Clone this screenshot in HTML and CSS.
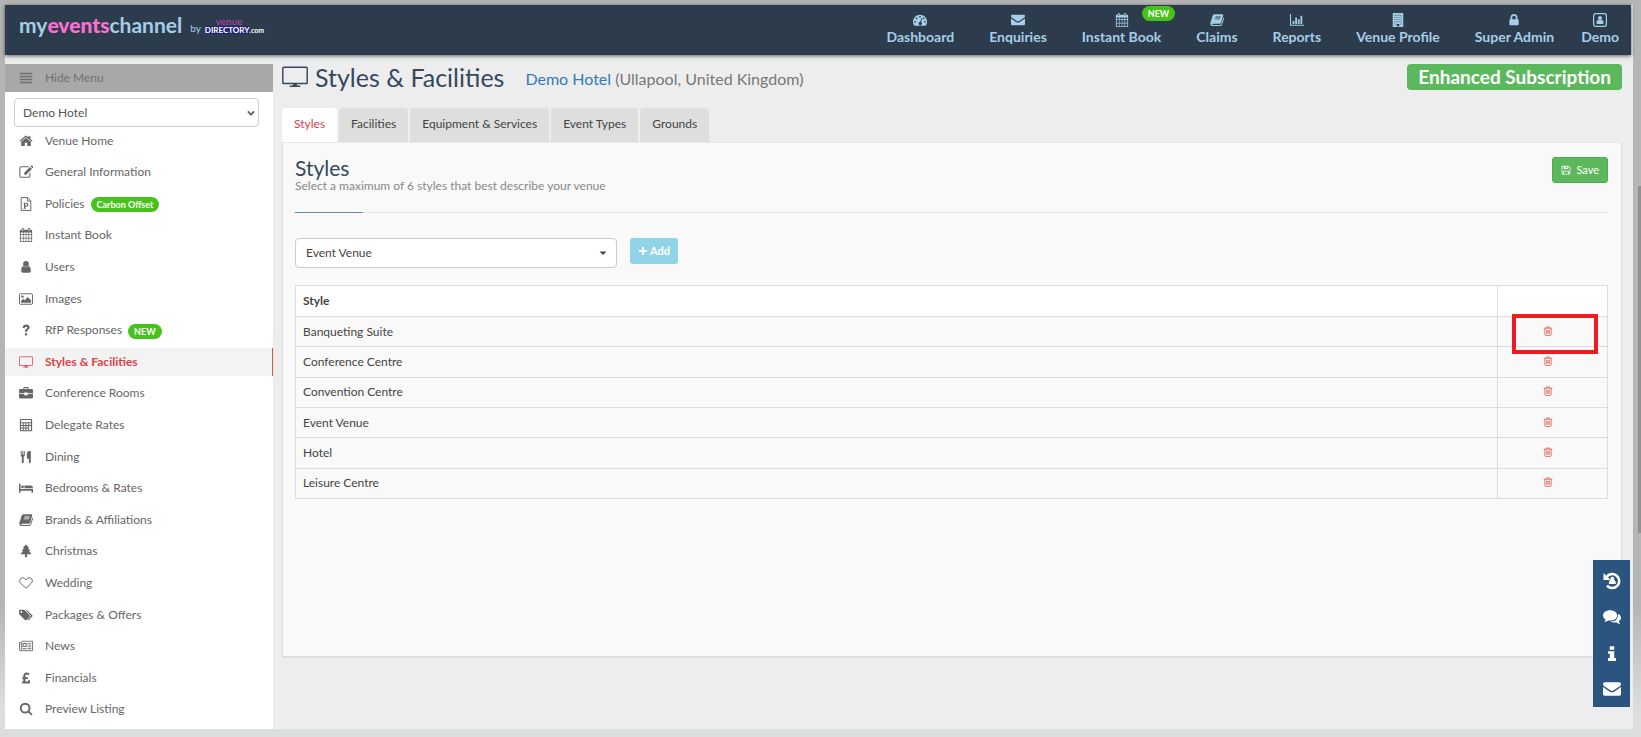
FILE: index.html
```html
<!DOCTYPE html>
<html lang="en">
<head>
  <meta charset="UTF-8" />
  <title>Styles &amp; Facilities</title>
  <meta name="viewport" content="width=device-width, initial-scale=1" />
  <link rel="stylesheet" href="styles.css">
</head>
<body>
  <!-- Icon sprite -->
  <svg class="sprite" aria-hidden="true">
    <symbol id="i-dash" viewBox="0 0 16 16"><path fill-rule="evenodd" d="M8 2a8 8 0 0 0-6.700 12.300q.2.400.7.400h12q.500 0 .7-.4A8 8 0 0 0 8 2zM8 3.300a1 1 0 1 1 0 2 1 1 0 0 1 0-2zM4 5a1 1 0 1 1 0 2 1 1 0 0 1 0-2zM2.400 9a1 1 0 1 1 0 2 1 1 0 0 1 0-2zM13.600 9a1 1 0 1 1 0 2 1 1 0 0 1 0-2zM12 5a1 1 0 1 1 0 2 1 1 0 0 1 0-2zM9.600 6l.9.300-1.300 4.300a1.800 1.800 0 1 1-1-.2z"/></symbol>
    <symbol id="i-mail" viewBox="0 0 16 16"><path d="M0 3.500Q0 2 1.500 2h13Q16 2 16 3.500q0 1-1.200 2L9.500 9.200Q8 10.300 6.500 9.200L1.200 5.500Q0 4.500 0 3.500zM0 6q.5.500 1 .8l4.800 3.400q2.200 1.500 4.400 0L15 6.800q.5-.3 1-.8v6.500q0 1.500-1.500 1.500h-13Q0 14 0 12.500z"/></symbol>
    <symbol id="i-cal" viewBox="0 0 16 16"><path fill-rule="evenodd" d="M1 3q0-1 1-1h1V1q0-1 1.200-1T5.400 1v1h5V1q0-1 1.200-1t1.200 1v1H14q1 0 1 1v12q0 1-1 1H2q-1 0-1-1zM3.800 1v2.500h.8V1zM11.200 1v2.500h.8V1zM2 5v2.200h2.500V5zM5.200 5v2.200h2.500V5zM8.400 5v2.200h2.400V5zM11.600 5v2.200H14V5zM2 8v3h2.500V8zM5.200 8v3h2.500V8zM8.400 8v3h2.400V8zM11.600 8v3H14V8zM2 12v3h2.500v-3zM5.200 12v3h2.500v-3zM8.400 12v3h2.400v-3zM11.600 12v3H14v-3z"/></symbol>
    <symbol id="i-book" viewBox="0 0 16 16"><path fill-rule="evenodd" d="M5.500 1.500H14q1.500 0 1 1.500l-2.300 8q-.4 1.300-1.700 1.300H3.300q-.8 0-.9.500.1.900 1.300.9h8.200q.8 0 1-.8L15.300 5q1 .6.600 1.800l-2.100 6.700q-.4 1.300-1.800 1.300H3.200Q1.300 14.800.5 13q-.4-1 0-2L3 3.200Q3.600 1.500 5.500 1.500zM6.300 4l-.3 1h6l.3-1zM5.700 6.200l-.3 1h6l.3-1z"/></symbol>
    <symbol id="i-chart" viewBox="0 0 16 16"><path d="M0 1h1.200v12.500H16v1.200H0zM3 9h2v3.500H3zM6 5h2v7.500H6zM9 7h2v5.500H9zM12 3h2v9.500h-2z"/></symbol>
    <symbol id="i-building" viewBox="0 0 16 16"><path fill-rule="evenodd" d="M2 0h12v16H2zM4 2v1h1V2zM6.300 2v1h1V2zM8.600 2v1h1V2zM11 2v1h1V2zM4 4.500v1h1v-1zM6.300 4.500v1h1v-1zM8.600 4.500v1h1v-1zM11 4.500v1h1v-1zM4 7v1h1V7zM6.300 7v1h1V7zM8.600 7v1h1V7zM11 7v1h1V7zM4 9.500v1h1v-1zM6.300 9.500v1h1v-1zM8.600 9.500v1h1v-1zM11 9.500v1h1v-1zM4 12v1h1v-1zM11 12v1h1v-1zM6.500 12.500V15h3v-2.500z"/></symbol>
    <symbol id="i-lock" viewBox="0 0 16 16"><path fill-rule="evenodd" d="M4 7V5a4 4 0 0 1 8 0v2h.5q.8 0 .8.800v5.400q0 .8-.8.800h-9q-.8 0-.8-.8V7.800q0-.8.8-.8zM6 7h4V5a2 2 0 0 0-4 0z"/></symbol>
    <symbol id="i-idbox" viewBox="0 0 16 16"><rect x="0.700" y="0.700" width="14.600" height="14.600" rx="2.500" fill="none" stroke="currentColor" stroke-width="1.400"/><circle cx="8" cy="5.800" r="2.300"/><path d="M4 12.500q0-5 2.300-4.800Q8 9 9.700 7.700 12 7.500 12 12.500z"/></symbol>
    <symbol id="i-bars" viewBox="0 0 16 16"><path d="M1 2h14v1.800H1zM1 5.400h14v1.800H1zM1 8.800h14v1.800H1zM1 12.200h14V14H1z"/></symbol>
    <symbol id="i-home" viewBox="0 0 16 16"><path d="M8 4.200l5.500 4.600V13q0 .7-.7.700H9.400V10H6.600v3.700H3.200q-.7 0-.7-.7V8.800zM8 1.800q.5 0 .9.400l1.900 1.600V2.500h2.200v3.200l2.500 2.100-.8 1L8 3.300l-6.700 5.500-.8-1L7.100 2.200q.4-.4.900-.4z"/></symbol>
    <symbol id="i-edit" viewBox="0 0 16 16"><path d="M12.500 9v3.500q0 1.500-1.500 1.500H2.500Q1 14 1 12.500v-9Q1 2 2.500 2H11" fill="none" stroke="currentColor" stroke-width="1.200"/><path d="M12.500 2.200l2.300 2.300-6.600 6.600H6V8.800zM13.200 1.500l.8-.8q.5-.4 1 0l1 1q.5.500 0 1.100l-.7.900z"/></symbol>
    <symbol id="i-file" viewBox="0 0 16 16"><path d="M2.500.6h7.300l3.700 3.700v11.100h-11zM9.500.6v4h4" fill="none" stroke="currentColor" stroke-width="1.100"/><path fill-rule="evenodd" d="M5 6.500h3.500q2.300.2 2.300 2.200T8.500 11H7.200v1.500H8v1H5v-1h.7v-5H5zM7.200 7.500V10h1q1.100 0 1.100-1.300 0-1.200-1.100-1.200z"/></symbol>
    <symbol id="i-user" viewBox="0 0 16 16"><circle cx="8" cy="4.500" r="3.300"/><path d="M2.500 12.500q0-5.500 2.800-5.300 2.700 2 5.400 0 2.800-.2 2.800 5.300 0 2-2 2h-7q-2 0-2-2z"/></symbol>
    <symbol id="i-image" viewBox="0 0 16 16"><rect x="0.600" y="2" width="14.800" height="12" rx="1" fill="none" stroke="currentColor" stroke-width="1.100"/><circle cx="4" cy="5.300" r="1.400"/><path d="M2.300 12.300v-2L5 7.800l1.500 1.500L10 5.600l3.700 3.800v2.900z"/></symbol>
    <symbol id="i-question" viewBox="0 0 16 16"><path d="M6.700 11.700h2.600v2.500H6.700zM4 5q1-3.200 4.200-3.200 3.900.2 4 3.400 0 1.700-1.800 2.800-1.100.6-1.100 1.400v.6H6.700V9q0-1.500 1.900-2.400.9-.5.900-1.200-.1-1.100-1.500-1.200-1 .1-2 2z"/></symbol>
    <symbol id="i-desktop" viewBox="0 0 16 16"><path d="M1 2h14q.5 0 .5.500v9q0 .5-.5.500H1q-.5 0-.5-.5v-9Q.5 2 1 2z" fill="none" stroke="currentColor" stroke-width="0.900"/><path d="M6.800 12h2.400v1.300h2v.9H4.800v-.9h2z"/></symbol>
    <symbol id="i-case" viewBox="0 0 16 16"><path d="M5 3.500V2q0-1 1-1h4q1 0 1 1v1.500h3.500Q16 3.500 16 5v3.200h-6V7.500H6v.7H0V5q0-1.500 1.500-1.500zM6.200 2.200v1.300h3.600V2.200zM0 9.200h6v1.500h4V9.200h6V13q0 1.300-1.500 1.300h-13Q0 14.300 0 13z" fill-rule="evenodd"/></symbol>
    <symbol id="i-calc" viewBox="0 0 16 16"><path fill-rule="evenodd" d="M2 1h12q1 0 1 1v12q0 1-1 1H2q-1 0-1-1V2q0-1 1-1zM2.300 2.300v2.600h11.400V2.300zM2.300 6v1.900h2V6zM5.400 6v1.900h2V6zM8.500 6v1.900h2V6zM11.600 6v1.900h2V6zM2.300 9v1.900h2V9zM5.400 9v1.900h2V9zM8.500 9v1.900h2V9zM2.300 12v1.900h2V12zM5.400 12v1.900h2V12zM8.500 12v1.900h2V12zM11.600 9v4.900h2V9z"/></symbol>
    <symbol id="i-cutlery" viewBox="0 0 16 16"><path d="M2 1h1v4h.8V1h1v4h.8V1h1v5q0 1.300-1.200 1.800V14q0 1-1.100 1t-1.100-1V7.800Q2 7.300 2 6zM9 4q0-3 3-3h1.500v13q0 1-1.100 1t-1.100-1v-4H9z"/></symbol>
    <symbol id="i-bed" viewBox="0 0 16 16"><path d="M0 3h1.700v6H16v4.500h-1.700v-2.300H1.700v2.300H0z"/><circle cx="4" cy="6.600" r="1.600"/><path d="M6.200 8.300V5h7q2.800.2 2.800 3.300z"/></symbol>
    <symbol id="i-tree" viewBox="0 0 16 16"><path d="M8 .5l3.700 3.800h-1.600L13 7.800h-1.800l3.300 4H9.200V15H6.800v-3.200H1.500l3.300-4H3l2.900-3.500H4.300z"/></symbol>
    <symbol id="i-heart" viewBox="0 0 16 16"><path d="M8 14L2 8.300Q.6 6.900.7 5 1 2.400 4 2q2.300 0 4 2.400Q9.700 2 12 2q3 .4 3.300 3 .1 1.900-1.300 3.300z" fill="none" stroke="currentColor" stroke-width="1.100"/></symbol>
    <symbol id="i-tags" viewBox="0 0 16 16"><path fill-rule="evenodd" d="M0 3q0-1 1-1h4q1 0 1.700.7l5.500 5.500q.8.800 0 1.600l-3.800 3.900q-.8.800-1.600 0L.8 7.700Q0 7 0 6zM2.600 3.500a1.100 1.100 0 1 0 0 2.200 1.100 1.100 0 0 0 0-2.200z"/><path d="M7.500 2q1 0 1.700.7l6 5.500q.8.800 0 1.600l-4 4q-.7.600-1.300 0L9.500 13.500l4-4.500q0-.4-.4-.8z"/></symbol>
    <symbol id="i-news" viewBox="0 0 16 16"><path d="M2.700 2.600h12.700v10.800H1.600q-1-.1-1-1.100V4h2.100v8.300q0 1-1 1.100" fill="none" stroke="currentColor" stroke-width="1"/><path fill-rule="evenodd" d="M4 4.500h4.700v4.700H4zM5.200 5.700V8h2.300V5.700zM9.700 4.500H14v1H9.700zM9.700 6.500H14v1H9.700zM9.700 8.500H14v1H9.700zM4 10.700h4.700v1H4zM9.700 10.700H14v1H9.700z"/></symbol>
    <symbol id="i-gbp" viewBox="0 0 16 16"><path d="M3.500 12h1.400V9H3.700V7.200h1.200V5.300Q5.200 1.800 8.700 1.600q2 0 3.500 1.500L10.800 4.900Q9.900 4 8.900 4q-1.500.2-1.500 1.600v1.600h2.900V9H7.400v3h2.800v-1.500h2.300v3.700h-9z"/></symbol>
    <symbol id="i-search" viewBox="0 0 16 16"><circle cx="7" cy="7" r="5" fill="none" stroke="currentColor" stroke-width="2.200"/><path d="M10 11.500l1.500-1.500 3.700 3.700q.3.700-.2 1.200-.6.500-1.300.2z"/></symbol>
    <symbol id="i-save" viewBox="0 0 16 16"><path fill-rule="evenodd" d="M1 2q0-1 1-1h9.500L15 4.500V14q0 1-1 1H2q-1 0-1-1zM2.200 2.200v11.600h1V9.300h9.600v4.500h1V5.100l-2.900-2.900v4H4.200v-4zM7.700 2.500v2.700h2V2.500zM4.400 10.500v3.300h7.200v-3.300z"/></symbol>
    <symbol id="i-plus" viewBox="0 0 16 16"><path d="M6.300 1.500h3.400v4.800h4.800v3.400H9.700v4.800H6.300V9.700H1.500V6.300h4.800z"/></symbol>
    <symbol id="i-trash" viewBox="0 0 16 16"><path d="M5.500 3V1.600h5V3M1 3.500h14M3 3.500V14q0 1 1 1h8q1 0 1-1V3.500M6 6v6.500M8 6v6.500M10 6v6.500" fill="none" stroke="currentColor" stroke-width="1.400"/></symbol>
    <symbol id="i-history" viewBox="0 0 18 18"><path d="M3.500 5A7 7 0 1 1 4 13.700" fill="none" stroke="currentColor" stroke-width="2.600"/><path d="M.5 1v7h7z"/><circle cx="9.300" cy="6.800" r="2"/><path d="M5.800 12q0-4 2-4h3q2 0 2 4z"/></symbol>
    <symbol id="i-comments" viewBox="0 0 16 16"><path d="M6.300 2c3.500 0 6.300 2 6.300 4.600s-2.800 4.600-6.300 4.600q-.9 0-1.700-.1Q3 12.300 1 12.500q1-1 1.300-2.300Q0 8.900 0 6.600C0 4 2.800 2 6.300 2z"/><path d="M13.500 5q2.500 1.300 2.500 3.600 0 1.900-2 3.200.4 1.300 1.400 2.400-2.200-.2-3.800-1.500-3 .5-5.100-.6 7.200-.2 7-7.100z"/></symbol>
    <symbol id="i-info" viewBox="0 0 16 16"><path d="M6 2h4v3H6zM4.500 6.500H10v6h1.500V15h-7v-2.500H6V8.700H4.500z"/></symbol>
    <symbol id="i-caret" viewBox="0 0 16 16"><path d="M1 5h14l-7 7z"/></symbol>
    <symbol id="i-chevron" viewBox="0 0 16 16"><path d="M3 5.500l5 5 5-5" fill="none" stroke="currentColor" stroke-width="3"/></symbol>
  </svg>

  <div class="app">
    <!-- Top bar -->
    <header class="topbar">
      <a class="logo" href="#">
        <span class="logo-name">my<b>events</b>channel</span>
        <span class="logo-by">by</span>
        <span class="logo-vd">
          <span class="vd-venue">venue</span>
          <span class="vd-row"><span class="vd-dir">DIRECTORY</span><span class="vd-com">.com</span></span>
        </span>
      </a>
      <nav class="topnav">
        <a href="#"><svg><use href="#i-dash"/></svg>Dashboard</a>
        <a href="#"><svg><use href="#i-mail"/></svg>Enquiries</a>
        <a href="#"><svg><use href="#i-cal"/></svg>Instant Book<span class="pill pill-top">NEW</span></a>
        <a href="#"><svg><use href="#i-book"/></svg>Claims</a>
        <a href="#"><svg><use href="#i-chart"/></svg>Reports</a>
        <a href="#"><svg><use href="#i-building"/></svg>Venue Profile</a>
        <a href="#"><svg><use href="#i-lock"/></svg>Super Admin</a>
        <a href="#" class="account"><svg><use href="#i-idbox"/></svg>Demo</a>
      </nav>
    </header>

    <div class="body">
      <!-- Sidebar -->
      <aside class="sidebar">
        <button class="hide-menu" type="button"><svg><use href="#i-bars"/></svg>Hide Menu</button>
        <div class="select venue-select">
          <select aria-label="Venue"><option>Demo Hotel</option></select>
          <svg><use href="#i-chevron"/></svg>
        </div>
        <nav class="menu">
          <a href="#"><svg><use href="#i-home"/></svg>Venue Home</a>
          <a href="#"><svg><use href="#i-edit"/></svg>General Information</a>
          <a href="#"><svg><use href="#i-file"/></svg>Policies <span class="pill">Carbon Offset</span></a>
          <a href="#"><svg><use href="#i-cal"/></svg>Instant Book</a>
          <a href="#"><svg><use href="#i-user"/></svg>Users</a>
          <a href="#"><svg><use href="#i-image"/></svg>Images</a>
          <a href="#"><svg><use href="#i-question"/></svg>RfP Responses <span class="pill">NEW</span></a>
          <a href="#" class="active"><svg><use href="#i-desktop"/></svg>Styles &amp; Facilities</a>
          <a href="#"><svg><use href="#i-case"/></svg>Conference Rooms</a>
          <a href="#"><svg><use href="#i-calc"/></svg>Delegate Rates</a>
          <a href="#"><svg><use href="#i-cutlery"/></svg>Dining</a>
          <a href="#"><svg><use href="#i-bed"/></svg>Bedrooms &amp; Rates</a>
          <a href="#"><svg><use href="#i-book"/></svg>Brands &amp; Affiliations</a>
          <a href="#"><svg><use href="#i-tree"/></svg>Christmas</a>
          <a href="#"><svg><use href="#i-heart"/></svg>Wedding</a>
          <a href="#"><svg><use href="#i-tags"/></svg>Packages &amp; Offers</a>
          <a href="#"><svg><use href="#i-news"/></svg>News</a>
          <a href="#"><svg><use href="#i-gbp"/></svg>Financials</a>
          <a href="#"><svg><use href="#i-search"/></svg>Preview Listing</a>
        </nav>
      </aside>

      <!-- Main Content -->
      <main class="content">
        <div class="page-head">
          <svg><use href="#i-desktop"/></svg>
          <h1>Styles &amp; Facilities</h1>
          <p><a href="#">Demo Hotel</a> (Ullapool, United Kingdom)</p>
          <span class="subscription">Enhanced Subscription</span>
        </div>

        <nav class="tabs">
          <a href="#" class="active">Styles</a>
          <a href="#">Facilities</a>
          <a href="#">Equipment &amp; Services</a>
          <a href="#">Event Types</a>
          <a href="#">Grounds</a>
        </nav>

        <section class="panel">
          <div class="panel-head">
            <div>
              <h2>Styles</h2>
              <p>Select a maximum of 6 styles that best describe your venue</p>
            </div>
            <button class="btn btn-save" type="button"><svg><use href="#i-save"/></svg>Save</button>
          </div>
          <div class="add-row">
            <div class="select style-select">
              <select aria-label="Style"><option>Event Venue</option></select>
              <svg><use href="#i-caret"/></svg>
            </div>
            <button class="btn btn-add" type="button"><svg><use href="#i-plus"/></svg>Add</button>
          </div>
          <table class="styles-table">
            <thead>
              <tr><th>Style</th><th class="action"></th></tr>
            </thead>
            <tbody>
              <tr><td>Banqueting Suite</td><td class="action"><button type="button" aria-label="Delete"><svg><use href="#i-trash"/></svg></button><span class="marker"></span></td></tr>
              <tr><td>Conference Centre</td><td class="action"><button type="button" aria-label="Delete"><svg><use href="#i-trash"/></svg></button></td></tr>
              <tr><td>Convention Centre</td><td class="action"><button type="button" aria-label="Delete"><svg><use href="#i-trash"/></svg></button></td></tr>
              <tr><td>Event Venue</td><td class="action"><button type="button" aria-label="Delete"><svg><use href="#i-trash"/></svg></button></td></tr>
              <tr><td>Hotel</td><td class="action"><button type="button" aria-label="Delete"><svg><use href="#i-trash"/></svg></button></td></tr>
              <tr><td>Leisure Centre</td><td class="action"><button type="button" aria-label="Delete"><svg><use href="#i-trash"/></svg></button></td></tr>
            </tbody>
          </table>
        </section>
      </main>
    </div>

    <!-- Floating tools -->
    <div class="tools">
      <button type="button" aria-label="History"><svg><use href="#i-history"/></svg></button>
      <button type="button" aria-label="Chat"><svg><use href="#i-comments"/></svg></button>
      <button type="button" aria-label="Info"><svg><use href="#i-info"/></svg></button>
      <button type="button" aria-label="Email"><svg><use href="#i-mail"/></svg></button>
    </div>
  </div>
  <div class="scroll-thumb"></div>
</body>
</html>
```
FILE: styles.css
```css
* {
  box-sizing: border-box;
}

body {
  margin: 0;
  min-height: 100vh;
  padding: 5px 8px 8px 5px;
  display: flex;
  position: relative;
  font-family: "Trebuchet MS", Lato, sans-serif;
  font-size: 12px;
  line-height: 16px;
  color: #444;
  background: linear-gradient(#b4b6b5 0, #b4b6b5 82%, #dcdedd 96%);
}

a {
  text-decoration: none;
  color: inherit;
}

h1, h2, p {
  margin: 0;
  font-weight: normal;
}

button, select {
  font: inherit;
  color: inherit;
  cursor: pointer;
}

svg {
  width: 14px;
  height: 14px;
  fill: currentColor;
  flex: none;
}

.sprite {
  display: none;
}

.app {
  flex: 1;
  display: flex;
  flex-direction: column;
  position: relative;
  background: #ededed;
}

/* Top bar */
.topbar {
  display: flex;
  justify-content: space-between;
  height: 50px;
  margin-right: 2px;
  padding: 0 12px 0 14px;
  background: #2c3c4d;
  color: #a6cee6;
  box-shadow: 0 1px 4px rgba(0, 0, 0, 0.6);
}

.logo {
  display: flex;
  align-items: center;
  height: 40px;
}

.logo-name {
  font-family: Lato, sans-serif;
  font-size: 21px;
  font-weight: bold;
  line-height: 28px;
}

.logo-name b {
  color: #ff6fcf;
}

.logo-by {
  margin: 6px 4px 0 8px;
  font-size: 10px;
  line-height: 12px;
}

.logo-vd {
  display: flex;
  flex-direction: column;
  align-items: flex-start;
}

.vd-venue {
  padding-left: 11px;
  color: #c040ae;
  font-size: 10px;
  line-height: 10px;
}

.vd-row {
  display: flex;
  align-items: flex-end;
  font-weight: bold;
  line-height: 8px;
  color: #fff;
}

.vd-dir {
  background: #23237a;
  font-size: 8px;
}

.vd-com {
  font-size: 7px;
}

.topnav {
  display: flex;
  gap: 35px;
  font-size: 14px;
  font-weight: bold;
}

.topnav a {
  display: flex;
  flex-direction: column;
  align-items: center;
  gap: 2px;
  padding-top: 8px;
  position: relative;
}

.topnav .account {
  margin-left: -8px;
}

.pill {
  padding: 0 6px;
  margin: 2px 0 0 6px;
  border-radius: 8px;
  background: #46c31b;
  color: #fff;
  font-size: 9px;
  font-weight: bold;
  line-height: 15px;
}

.pill-top {
  position: absolute;
  top: 1px;
  right: -14px;
  margin: 0;
}

.body {
  flex: 1;
  display: flex;
  padding-top: 9px;
}

/* Sidebar */
.sidebar {
  width: 268px;
  display: flex;
  flex-direction: column;
  background: #fff;
  color: #666;
}

.hide-menu {
  display: flex;
  align-items: center;
  gap: 12px;
  height: 28px;
  padding: 0 14px;
  border: 0;
  background: #a8a8a8;
  color: #707070;
}

.select {
  position: relative;
  display: flex;
}

.select select {
  flex: 1;
  appearance: none;
  border: 1px solid #ccc;
  border-radius: 4px;
  background: #fff;
  outline: 0;
}

.select svg {
  position: absolute;
  pointer-events: none;
}

.venue-select {
  height: 29px;
  margin: 6px 14px 0 9px;
}

.venue-select select {
  padding: 0 8px;
  color: #555;
}

.venue-select svg {
  top: 10px;
  right: 3px;
  width: 10px;
  height: 10px;
}

.menu {
  flex: 1;
  display: flex;
  flex-direction: column;
  justify-content: space-between;
  padding-bottom: 5px;
}

.menu a {
  display: flex;
  align-items: center;
  height: 28px;
  padding: 0 0 1px 14px;
}

.menu svg {
  margin-right: 12px;
}

.menu .active {
  background: #f3f3f3;
  border-right: 1px solid #d9534f;
  color: #d9434a;
  font-weight: bold;
}

/* Main content */
.content {
  flex: 1;
  padding: 0 11px 0 9px;
}

.page-head {
  display: flex;
  align-items: center;
  height: 26px;
  color: #34495e;
}

.page-head svg {
  width: 26px;
  height: 26px;
}

.page-head h1 {
  margin: 0 21px 0 7px;
  font-size: 25px;
  line-height: 26px;
}

.page-head p {
  padding-top: 4px;
  font-size: 16px;
  color: #777;
}

.page-head p a {
  color: #337ab7;
}

.subscription {
  margin-left: auto;
  padding: 0 11px;
  border-radius: 4px;
  background: #5cb85c;
  color: #fff;
  font-size: 19px;
  font-weight: bold;
  line-height: 26px;
}

.tabs {
  display: flex;
  gap: 2px;
  padding-top: 18px;
}

.tabs a {
  padding: 8px 12px 10px;
  border-radius: 4px 4px 0 0;
  background: #dedede;
}

.tabs .active {
  background: #fff;
  color: #d9434a;
}

.panel {
  height: 516px;
  padding: 14px 13px 14px 12px;
  border: 1px solid #ddd;
  border-top-color: #e8e8e8;
  border-bottom-width: 2px;
  background: #f9f9f9;
}

.panel-head {
  display: flex;
  justify-content: space-between;
  align-items: flex-start;
  height: 56px;
  border-bottom: 1px solid #e5e5e5;
  position: relative;
}

.panel-head::after {
  content: "";
  position: absolute;
  left: 0;
  bottom: -1px;
  width: 68px;
  height: 1px;
  background: #5f8bb5;
}

.panel-head h2 {
  font-size: 21px;
  line-height: 22px;
  color: #34495e;
}

.panel-head p {
  color: #888;
  line-height: 14px;
}

.btn {
  display: flex;
  align-items: center;
  justify-content: center;
  height: 26px;
  border: 1px solid transparent;
  border-radius: 3px;
  color: #fff;
  font-size: 11px;
}

.btn svg {
  width: 10px;
  height: 10px;
}

.btn-save {
  gap: 5px;
  padding: 0 8px;
  background: #5cb85c;
  border-color: #4cae4c;
}

.btn-add {
  gap: 2px;
  padding: 0 7px;
  background: #91d4e8;
  font-weight: bold;
}

.add-row {
  display: flex;
  gap: 13px;
  padding: 25px 0 17px;
}

.style-select {
  width: 322px;
  height: 30px;
}

.style-select select {
  padding: 0 10px;
}

.style-select svg {
  top: 11px;
  right: 10px;
  width: 8px;
  height: 8px;
}

.styles-table {
  width: 100%;
  height: 214px;
  border-collapse: collapse;
}

.styles-table th,
.styles-table td {
  padding: 0 7px;
  border: 1px solid #ddd;
  text-align: left;
}

.styles-table th {
  height: 31px;
  background: #fff;
}

.styles-table .action {
  width: 110px;
  padding-right: 16px;
  text-align: center;
  position: relative;
}

.action button {
  display: inline-flex;
  padding: 0;
  border: 0;
  background: none;
  color: #d9634f;
}

.action svg {
  width: 10px;
  height: 10px;
}

/* Highlight round the first delete button */
.marker {
  position: absolute;
  top: -3px;
  left: 14px;
  width: 86px;
  height: 40px;
  border: 4px solid #ed1c24;
  pointer-events: none;
}

/* Floating tools */
.tools {
  position: absolute;
  right: 3px;
  bottom: 22px;
  display: flex;
  flex-direction: column;
  justify-content: space-around;
  width: 37px;
  height: 147px;
  padding-top: 3px;
  background: #2b547e;
}

.tools button {
  display: flex;
  justify-content: center;
  padding: 0;
  border: 0;
  background: none;
  color: #fff;
}

.tools svg {
  width: 18px;
  height: 18px;
}

.scroll-thumb {
  position: absolute;
  top: 186px;
  right: 0;
  width: 3px;
  height: 347px;
  background: #8f908f;
}
```
